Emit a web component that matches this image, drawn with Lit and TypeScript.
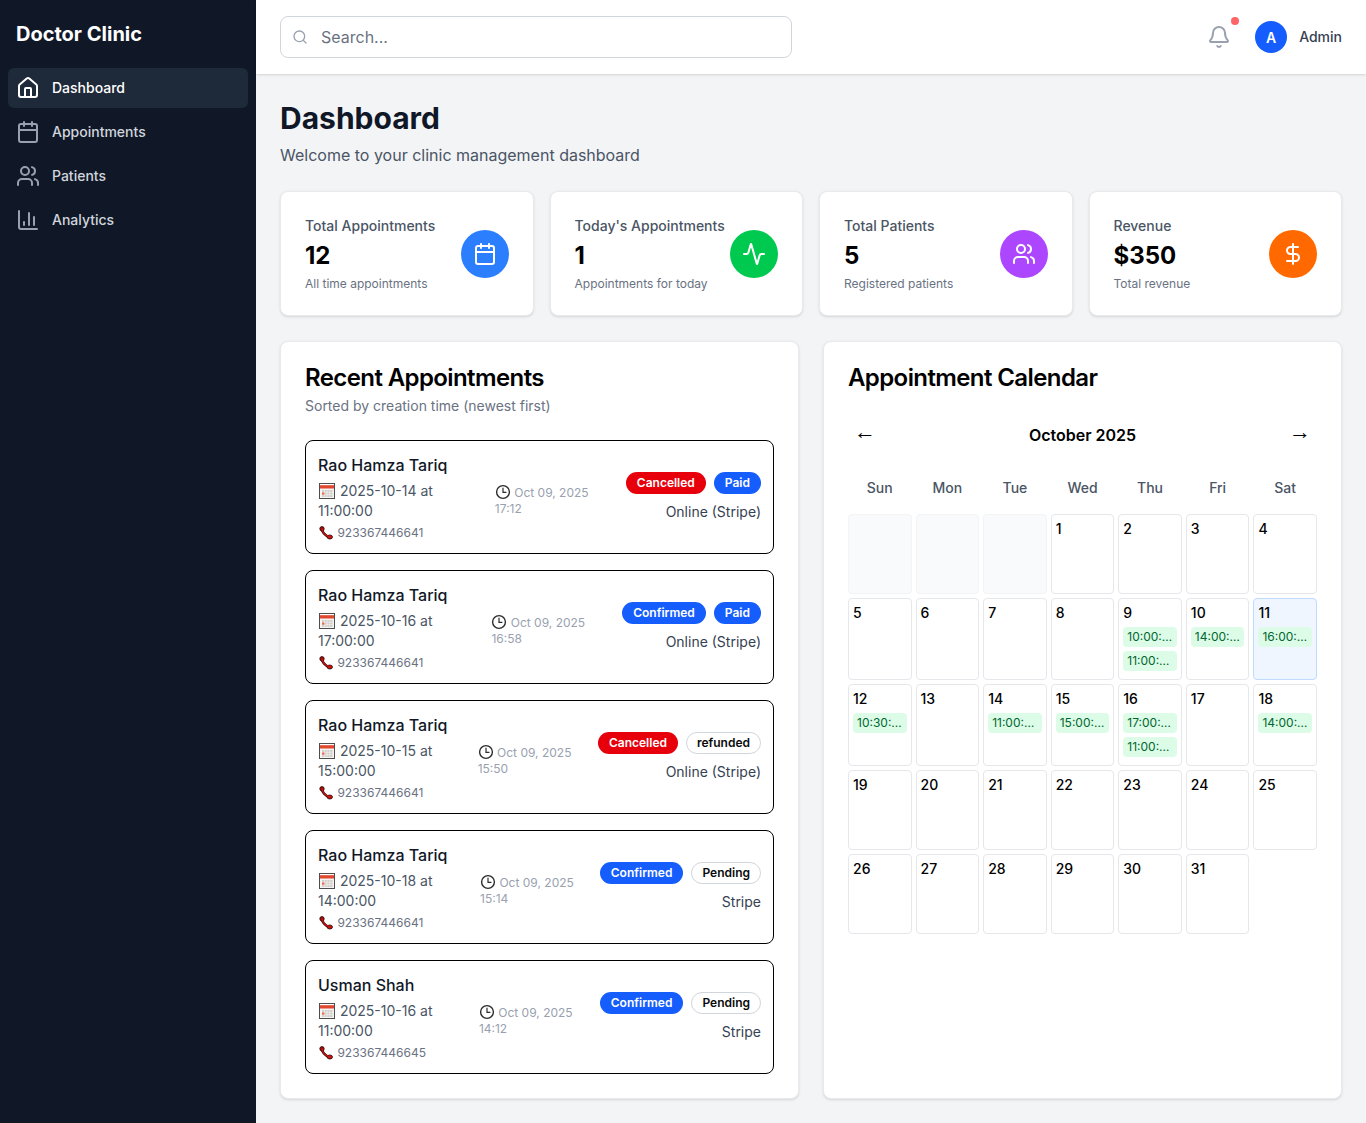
import { LitElement, css, html, svg } from 'lit'
import { customElement } from 'lit/decorators.js'

const icon = (body: unknown, size = 24, width = 2) => html`<svg
  width=${size} height=${size} viewBox="0 0 24 24" fill="none" stroke="currentColor"
  stroke-width=${width} stroke-linecap="round" stroke-linejoin="round">${body}</svg>`

const homeIcon = svg`<path d="M15 21v-8a1 1 0 0 0-1-1h-4a1 1 0 0 0-1 1v8"/><path d="M3 10a2 2 0 0 1 .709-1.528l7-5.999a2 2 0 0 1 2.582 0l7 5.999A2 2 0 0 1 21 10v9a2 2 0 0 1-2 2H5a2 2 0 0 1-2-2z"/>`
const calendarIcon = svg`<path d="M8 2v4"/><path d="M16 2v4"/><rect width="18" height="18" x="3" y="4" rx="2"/><path d="M3 10h18"/>`
const usersIcon = svg`<path d="M16 21v-2a4 4 0 0 0-4-4H6a4 4 0 0 0-4 4v2"/><path d="M16 3.128a4 4 0 0 1 0 7.744"/><path d="M22 21v-2a4 4 0 0 0-3-3.87"/><circle cx="9" cy="7" r="4"/>`
const chartIcon = svg`<path d="M3 3v16a2 2 0 0 0 2 2h16"/><path d="M18 17V9"/><path d="M13 17V5"/><path d="M8 17v-3"/>`
const activityIcon = svg`<path d="M22 12h-2.48a2 2 0 0 0-1.93 1.46l-2.35 8.36a.25.25 0 0 1-.48 0L9.24 2.18a.25.25 0 0 0-.48 0l-2.35 8.36A2 2 0 0 1 4.49 12H2"/>`
const dollarIcon = svg`<line x1="12" x2="12" y1="2" y2="22"/><path d="M17 5H9.5a3.5 3.5 0 0 0 0 7h5a3.5 3.5 0 0 1 0 7H6"/>`
const bellIcon = svg`<path d="M10.268 21a2 2 0 0 0 3.464 0"/><path d="M3.262 15.326A1 1 0 0 0 4 17h16a1 1 0 0 0 .74-1.673C19.41 13.956 18 12.499 18 8A6 6 0 0 0 6 8c0 4.499-1.411 5.956-2.738 7.326"/>`
const searchIcon = svg`<path d="m21 21-4.34-4.34"/><circle cx="11" cy="11" r="8"/>`

// the little emoji-like pictures in the appointment rows
const tearCalendar = html`<svg class="emoji cal" width="16" height="16" viewBox="0 0 16 16">
  <rect x="0.5" y="0.5" width="15" height="15" fill="#f6f4f2" stroke="#4d4d4d"/>
  <rect x="1" y="1" width="14" height="1.2" fill="#fff"/>
  <rect x="1" y="2.200" width="14" height="3.300" fill="#e0492f"/>
  <rect x="3" y="7" width="10.500" height="7" fill="#cfccc9"/>
  <path d="M5.500 7v7M8 7v7M10.800 7v7M3 9.300h10.500M3 11.700h10.500" stroke="#f3f1ef" stroke-width=".7"/>
  <rect x="3" y="9.500" width="2.400" height="2.200" fill="#ef6a4e"/>
</svg>`
const clockEmoji = html`<svg class="emoji clock" width="16" height="16" viewBox="0 0 16 16" fill="none">
  <circle cx="8" cy="8" r="6.400" fill="#fff" stroke="#2b2b2b" stroke-width="1.400"/>
  <path d="M8 4.200V8.300H11" stroke="#2b2b2b" stroke-width="1.200" stroke-linecap="round"/>
</svg>`
const phoneEmoji = html`<svg class="emoji phone" width="14" height="14" viewBox="0 0 14 14" fill="none">
  <path d="M2.800 2C2.400 5.200 6 10.400 11.500 11.500" stroke="#2a0606" stroke-width="2.600" stroke-linecap="round"/>
  <circle cx="3" cy="2.800" r="2.200" fill="#a50f0a" stroke="#2a0606" stroke-width=".8"/>
  <ellipse cx="10.800" cy="11" rx="2.700" ry="2" fill="#c8140e" stroke="#2a0606" stroke-width=".8"/>
  <path d="M3.100 3C3 5.600 6.200 9.800 10.500 10.800" stroke="#c8140e" stroke-width="1.500" stroke-linecap="round"/>
</svg>`

const NAV = [
  { label: 'Dashboard', icon: homeIcon, active: true },
  { label: 'Appointments', icon: calendarIcon },
  { label: 'Patients', icon: usersIcon },
  { label: 'Analytics', icon: chartIcon },
]

const STATS = [
  { label: 'Total Appointments', value: '12', note: 'All time appointments', color: '#2b7fff', icon: calendarIcon },
  { label: "Today's Appointments", value: '1', note: 'Appointments for today', color: '#00c950', icon: activityIcon },
  { label: 'Total Patients', value: '5', note: 'Registered patients', color: '#ad46ff', icon: usersIcon },
  { label: 'Revenue', value: '$350', note: 'Total revenue', color: '#ff6900', icon: dollarIcon },
]

const APPOINTMENTS = [
  { name: 'Rao Hamza Tariq', date: '2025-10-14', time: '11:00:00', phone: '923367446641', made: '17:12', status: 'Cancelled', pay: 'Paid', method: 'Online (Stripe)' },
  { name: 'Rao Hamza Tariq', date: '2025-10-16', time: '17:00:00', phone: '923367446641', made: '16:58', status: 'Confirmed', pay: 'Paid', method: 'Online (Stripe)' },
  { name: 'Rao Hamza Tariq', date: '2025-10-15', time: '15:00:00', phone: '923367446641', made: '15:50', status: 'Cancelled', pay: 'refunded', method: 'Online (Stripe)' },
  { name: 'Rao Hamza Tariq', date: '2025-10-18', time: '14:00:00', phone: '923367446641', made: '15:14', status: 'Confirmed', pay: 'Pending', method: 'Stripe' },
  { name: 'Usman Shah', date: '2025-10-16', time: '11:00:00', phone: '923367446645', made: '14:12', status: 'Confirmed', pay: 'Pending', method: 'Stripe' },
]

const EVENTS: Record<number, string[]> = {
  9: ['10:00:00 Patient', '11:00:00 Patient'],
  10: ['14:00:00 Patient'],
  11: ['16:00:00 Patient'],
  12: ['10:30:00 Patient'],
  14: ['11:00:00 Patient'],
  15: ['15:00:00 Patient'],
  16: ['17:00:00 Patient', '11:00:00 Patient'],
  18: ['14:00:00 Patient'],
}

const WEEKDAYS = ['Sun', 'Mon', 'Tue', 'Wed', 'Thu', 'Fri', 'Sat']
const TODAY = 11

@customElement('app-root')
export class AppRoot extends LitElement {
  static styles = css`
    :host {
      display: block;
      font-family: Inter, 'Liberation Sans', sans-serif;
      color: #101828;
    }
    * { box-sizing: border-box; }
    .layout { display: flex; min-height: 1123px; background: #f3f4f6; }

    .sidebar { width: 256px; flex-shrink: 0; background: #101828; color: #fff; }
    .brand { height: 68px; padding: 20px 16px 0; font-size: 20px; line-height: 28px; font-weight: 700; }
    .nav { display: flex; flex-direction: column; gap: 4px; padding: 0 8px; }
    .nav-item {
      display: flex; align-items: center; gap: 12px; height: 40px; padding: 0 8px;
      border-radius: 6px; font-size: 14px; font-weight: 500; color: #d1d5dc;
    }
    .nav-item span { padding-bottom: 2px; }
    .nav-item svg { color: #99a1af; }
    .nav-item.active { background: #1e2939; color: #fff; }
    .nav-item.active svg { color: #fff; }

    .content { flex: 1; min-width: 0; display: flex; flex-direction: column; }
    .topbar {
      height: 74px; padding: 16px 24px; background: #fff; display: flex; align-items: flex-start;
      justify-content: space-between; box-shadow: 0 1px 3px rgba(0, 0, 0, .1), 0 1px 2px -1px rgba(0, 0, 0, .1);
    }
    .search {
      width: 512px; height: 42px; display: flex; align-items: center; gap: 13px; padding: 0 11px;
      border: 1px solid #d1d5dc; border-radius: 8px; color: #99a1af; font-size: 16px;
    }
    .search span { color: #6a7282; }
    .top-right { display: flex; align-items: center; height: 42px; }
    .bell { position: relative; display: flex; color: #99a1af; margin-right: 24px; }
    .dot { position: absolute; top: -8px; right: -8px; width: 8px; height: 8px; border-radius: 50%; background: #ff6467; }
    .avatar {
      width: 32px; height: 32px; border-radius: 50%; background: #155dfc; color: #fff; display: flex;
      align-items: center; justify-content: center; font-size: 14px; font-weight: 600; margin-right: 12px;
    }
    .admin { font-size: 14px; font-weight: 500; color: #364153; padding-bottom: 2px; }

    .main { flex: 1; padding: 25px 24px 24px; display: flex; flex-direction: column; }
    h1 { margin: 1px 0 0; font-size: 30px; line-height: 36px; font-weight: 700; color: #101828; }
    .welcome { margin: 7px 0 0; font-size: 16px; line-height: 24px; color: #4a5565; }

    .stats { margin-top: 24px; display: grid; grid-template-columns: repeat(4, 1fr); gap: 16px; }
    .card {
      background: #fff; border: 1px solid #e9eaed; border-radius: 8px;
      box-shadow: 0 1px 3px rgba(0, 0, 0, .1), 0 1px 2px -1px rgba(0, 0, 0, .1);
    }
    .stat { display: flex; align-items: center; justify-content: space-between; padding: 24px; height: 125px; }
    .stat-label { font-size: 14px; line-height: 20px; font-weight: 500; color: #4a5565; }
    .stat-value { margin-top: 4px; font-size: 24px; line-height: 32px; font-weight: 700; color: #000; }
    .stat-note { margin-top: 4px; font-size: 12px; line-height: 16px; color: #6a7282; }
    .stat-icon {
      width: 48px; height: 48px; flex-shrink: 0; border-radius: 50%; color: #fff; display: flex;
      align-items: center; justify-content: center;
    }

    .panels { margin-top: 25px; flex: 1; display: grid; grid-template-columns: 1fr 1fr; gap: 24px; }
    .panel { padding: 20px 24px 24px; }
    h2 { margin: 0; font-size: 24px; line-height: 32px; font-weight: 600; color: #000; letter-spacing: -.6px; }
    .panel-sub { margin-top: 2px; font-size: 14px; line-height: 20px; color: #6a7282; }

    .list { margin-top: 24px; display: flex; flex-direction: column; gap: 16px; }
    .appt {
      display: flex; align-items: center; justify-content: space-between; gap: 16px; padding: 12px;
      border: 1px solid #000; border-radius: 8px;
    }
    .appt-name { font-size: 16px; line-height: 24px; font-weight: 500; color: #101828; }
    .appt-date { margin-top: 4px; font-size: 14px; line-height: 20px; color: #4a5565; }
    .appt-phone { margin-top: 4px; font-size: 12px; line-height: 16px; color: #6a7282; }
    .appt-made { padding-top: 6px; font-size: 12px; line-height: 16px; color: #99a1af; }
    .emoji { vertical-align: -3px; }
    .emoji.cal { margin: 0 1px 0 1px; }
    .emoji.phone { margin: 0 1px 0 1px; }
    .appt-right { flex-shrink: 0; display: flex; flex-direction: column; align-items: flex-end; gap: 8px; }
    .badges { display: flex; gap: 8px; }
    .badge {
      font-size: 12px; line-height: 16px; font-weight: 600; padding: 2px 10px; border-radius: 999px; color: #fff;
      border: 1px solid transparent;
    }
    .badge.red { background: #e7000b; }
    .badge.blue { background: #155dfc; }
    .badge.plain { color: #0a0a0a; background: #fff; border-color: #d1d5dc; }
    .method { font-size: 14px; line-height: 20px; color: #364153; }

    .cal-nav { margin-top: 20px; display: flex; align-items: center; justify-content: space-between; height: 42px; padding: 0 6px; }
    .arrow { font-family: 'Liberation Sans', sans-serif; font-size: 22px; line-height: 24px; padding-bottom: 6px; color: #000; }
    .month { font-size: 16px; line-height: 24px; font-weight: 600; color: #000; }
    .weekdays, .days { display: grid; grid-template-columns: repeat(7, 1fr); gap: 4px; }
    .weekdays { margin-top: 14px; }
    .weekday { text-align: center; font-size: 14px; line-height: 20px; font-weight: 500; color: #4a5565; padding: 8px 0; }
    .days { margin-top: 8px; }
    .day { min-height: 80px; min-width: 0; padding: 4px; border: 1px solid #e5e7eb; border-radius: 4px; background: #fff; }
    .day.blank { background: #f9fafb; border-color: #f3f4f6; }
    .day.today { background: #eff6ff; border-color: #bedbff; }
    .day-num { font-size: 14px; line-height: 20px; font-weight: 500; color: #000; }
    .events { margin-top: 4px; }
    .event {
      height: 20px; margin-bottom: 4px; padding: 0 4px; border-radius: 4px; background: #dcfce7; color: #016630;
      font-size: 12px; line-height: 20px; white-space: nowrap; overflow: hidden; text-overflow: ellipsis;
    }
  `

  private renderAppointment(a: (typeof APPOINTMENTS)[number]) {
    const payClass = a.pay === 'Paid' ? 'blue' : 'plain'
    return html`
      <div class="appt">
        <div class="appt-main">
          <div class="appt-name">${a.name}</div>
          <div class="appt-date">${tearCalendar} ${a.date} at ${a.time}</div>
          <div class="appt-phone">${phoneEmoji} ${a.phone}</div>
        </div>
        <div class="appt-made">${clockEmoji} Oct 09, 2025 ${a.made}</div>
        <div class="appt-right">
          <div class="badges">
            <span class="badge ${a.status === 'Cancelled' ? 'red' : 'blue'}">${a.status}</span>
            <span class="badge ${payClass}">${a.pay}</span>
          </div>
          <div class="method">${a.method}</div>
        </div>
      </div>
    `
  }

  private renderCalendar() {
    const blanks = [0, 1, 2].map(() => html`<div class="day blank"></div>`)
    const days = Array.from({ length: 31 }, (_, i) => i + 1).map(
      (d) => html`
        <div class="day ${d === TODAY ? 'today' : ''}">
          <div class="day-num">${d}</div>
          ${EVENTS[d]
            ? html`<div class="events">${EVENTS[d].map((e) => html`<div class="event">${e}</div>`)}</div>`
            : ''}
        </div>
      `,
    )
    return html`<div class="days">${blanks}${days}</div>`
  }

  render() {
    return html`
      <div class="layout">
        <aside class="sidebar">
          <div class="brand">Doctor Clinic</div>
          <nav class="nav">
            ${NAV.map(
              (n) => html`<div class="nav-item ${n.active ? 'active' : ''}">${icon(n.icon)}<span>${n.label}</span></div>`,
            )}
          </nav>
        </aside>
        <div class="content">
          <header class="topbar">
            <div class="search">${icon(searchIcon, 16)}<span>Search...</span></div>
            <div class="top-right">
              <div class="bell">${icon(bellIcon)}<i class="dot"></i></div>
              <div class="avatar">A</div>
              <div class="admin">Admin</div>
            </div>
          </header>
          <main class="main">
            <h1>Dashboard</h1>
            <p class="welcome">Welcome to your clinic management dashboard</p>
            <section class="stats">
              ${STATS.map(
                (s) => html`
                  <div class="card stat">
                    <div>
                      <div class="stat-label">${s.label}</div>
                      <div class="stat-value">${s.value}</div>
                      <div class="stat-note">${s.note}</div>
                    </div>
                    <div class="stat-icon" style="background:${s.color}">${icon(s.icon)}</div>
                  </div>
                `,
              )}
            </section>
            <section class="panels">
              <div class="card panel">
                <h2>Recent Appointments</h2>
                <div class="panel-sub">Sorted by creation time (newest first)</div>
                <div class="list">${APPOINTMENTS.map((a) => this.renderAppointment(a))}</div>
              </div>
              <div class="card panel">
                <h2>Appointment Calendar</h2>
                <div class="cal-nav">
                  <span class="arrow">←</span>
                  <span class="month">October 2025</span>
                  <span class="arrow">→</span>
                </div>
                <div class="weekdays">${WEEKDAYS.map((w) => html`<div class="weekday">${w}</div>`)}</div>
                ${this.renderCalendar()}
              </div>
            </section>
          </main>
        </div>
      </div>
    `
  }
}
